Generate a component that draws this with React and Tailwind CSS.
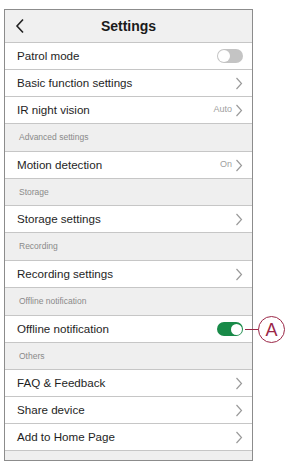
const Chevron = () => (
  <svg width="8" height="13" viewBox="0 0 8 13" className="shrink-0">
    <path d="M1.5 1 L6.5 6.5 L1.5 12" fill="none" stroke="#9a9a9a" strokeWidth="1.2" />
  </svg>
);

function Toggle({ on }) {
  return on ? (
    <div className="w-[26px] h-[14px] rounded-full bg-[#188a48] flex items-center justify-end pr-[1.5px]">
      <div className="w-[11px] h-[11px] rounded-full bg-white" />
    </div>
  ) : (
    <div className="w-[26px] h-[14px] rounded-full bg-[#c4c4c4] flex items-center pl-[1px]">
      <div className="w-[12px] h-[12px] rounded-full bg-white" />
    </div>
  );
}

function Row({ label, value, chevron = true, toggle, children }) {
  return (
    <div className="relative h-[27px] bg-white border-b border-[#c6c6c6] flex items-center pl-[12px] pr-[9px]">
      <span className="flex-1 text-[11.6px] text-[#1e1e1e]">{label}</span>
      {value && <span className="text-[9px] text-[#a0a0a0] mr-[3px]">{value}</span>}
      {toggle !== undefined ? <Toggle on={toggle} /> : chevron && <Chevron />}
      {children}
    </div>
  );
}

function Section({ title, tall }) {
  return (
    <div
      className={
        (tall ? "h-[28px]" : "h-[27px]") +
        " bg-[#efefef] border-b border-[#c6c6c6] flex items-center pl-[14px]"
      }
    >
      <span className="text-[8.5px] text-[#8a8a8a]">{title}</span>
    </div>
  );
}

export default function App() {
  return (
    <div
      className="w-[286px] h-[473px] bg-white pt-[9px] pl-[4px]"
      style={{ fontFamily: '"Liberation Sans", Arial, sans-serif' }}
    >
      <div className="w-[249px] border border-[#8c8c8c] bg-[#efefef]">
        <div className="h-[33px] bg-[#f0f0f0] border-b border-[#c6c6c6] flex items-center relative">
          <svg width="10" height="16" viewBox="0 0 10 16" className="absolute left-[10px] top-[8px]">
            <path d="M8 1.5 L2 8 L8 14.5" fill="none" stroke="#222" strokeWidth="1.6" />
          </svg>
          <span className="flex-1 text-center text-[14px] font-bold text-[#1a1a1a]">Settings</span>
        </div>
        <Row label="Patrol mode" toggle={false} />
        <Row label="Basic function settings" />
        <Row label="IR night vision" value="Auto" />
        <Section title="Advanced settings" tall />
        <Row label="Motion detection" value="On" />
        <Section title="Storage" />
        <Row label="Storage settings" />
        <Section title="Recording" tall />
        <Row label="Recording settings" />
        <Section title="Offline notification" tall />
        <Row label="Offline notification" toggle={true}>
          <div className="absolute left-[240px] top-[13px] w-[14px] h-px bg-[#9b2747]" />
          <div className="absolute left-[253px] top-[0px] w-[27px] h-[27px] rounded-full border border-[#9b2747] bg-white flex items-center justify-center">
            <span className="text-[18px] text-[#9b2747] leading-none">A</span>
          </div>
        </Row>
        <Section title="Others" />
        <Row label="FAQ & Feedback" />
        <Row label="Share device" />
        <Row label="Add to Home Page" />
        <div className="h-[9px] bg-[#efefef]" />
      </div>
    </div>
  );
}
